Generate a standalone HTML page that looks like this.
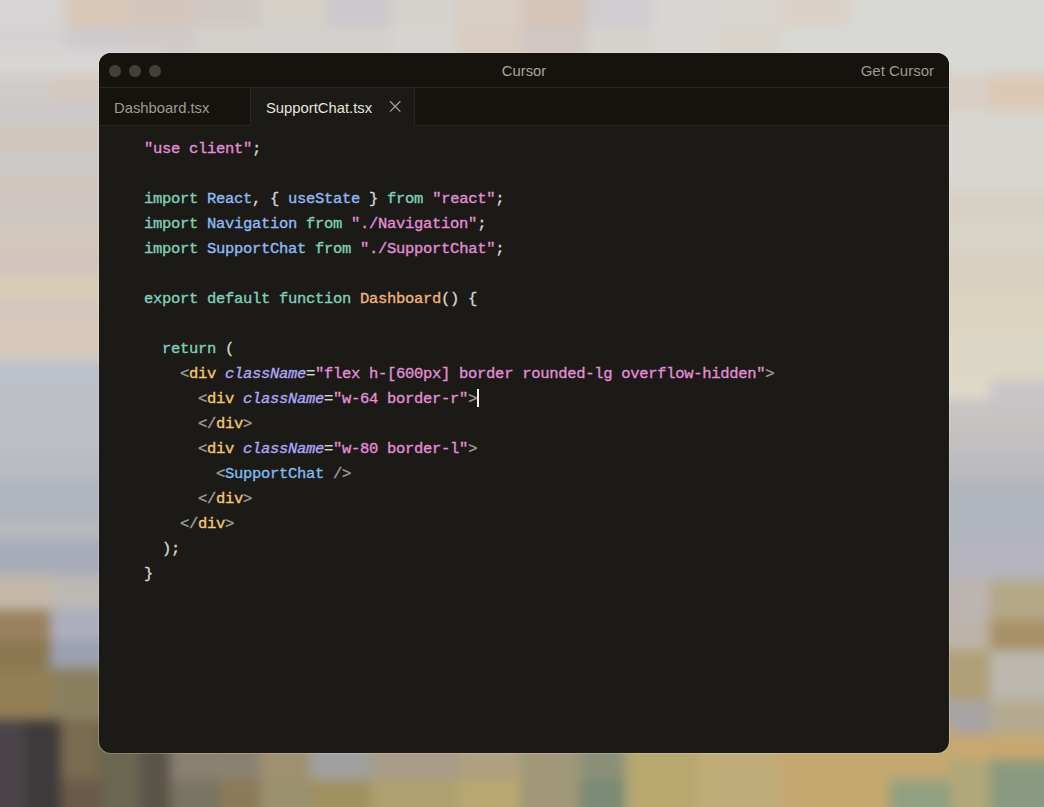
<!DOCTYPE html>
<html>
<head>
<meta charset="utf-8">
<style>
html,body{margin:0;padding:0;}
body{width:1044px;height:807px;overflow:hidden;position:relative;background:#d4d2ce;font-family:"Liberation Sans",sans-serif;}
#bg{position:absolute;left:0;top:0;width:1044px;height:807px;filter:blur(6px);}
#bg div{position:absolute;}
#st{position:absolute;left:0;top:0;width:1044px;height:807px;filter:blur(2.5px);}
#st div{position:absolute;border-radius:50%;}
.win{position:absolute;left:99px;top:53px;width:850px;height:700px;border-radius:12px;background:#1c1a16;overflow:hidden;box-shadow:0 0 0 1px rgba(255,255,255,0.2);}
.title{position:absolute;left:0;top:0;width:850px;height:34px;background:#16130e;border-bottom:1px solid #2a2721;}
.dot{position:absolute;top:11.5px;width:12px;height:12.5px;border-radius:50%;background:#42403b;}
.ttl{position:absolute;left:0;width:850px;top:1px;height:34px;line-height:34px;text-align:center;color:#a9a59d;font-size:14.8px;}
.get{position:absolute;right:15px;top:1px;height:34px;line-height:34px;color:#9d9990;font-size:15px;}
.tabs{position:absolute;left:0;top:35px;width:850px;height:37px;background:#16130e;border-bottom:1px solid #2a2721;}
.tab{position:absolute;top:0;height:37px;line-height:40px;font-size:14.8px;}
.tab1{left:15px;color:#9f9b93;}
.tab2{left:151px;width:163px;background:#1c1a16;border-left:1px solid #2a2721;border-right:1px solid #2a2721;height:38px;color:#e6e4de;}
.tab2 span{position:absolute;left:15px;}
.x{position:absolute;left:138px;top:12px;width:13px;height:13px;}
.code{position:absolute;left:45px;top:84px;font-family:"Liberation Mono",monospace;font-size:15.5px;letter-spacing:-0.3px;line-height:25px;white-space:pre;color:#d6d6d0;-webkit-text-stroke:0.35px currentColor;}
.s{color:#e08ed6}
.k{color:#80d0bc}
.i{color:#8fbaf4}
.f{color:#f0b27e}
.p{color:#d6d6d0}
.t{color:#f2c874}
.a{color:#aea6f6;font-style:italic}
.b{color:#a29e98}
.c{color:#7cbcf4}
.cur{display:inline-block;width:2px;height:18px;background:#f0f0f0;vertical-align:-4px;margin-left:0;}
</style>
</head>
<body>
<div id="bg"><div style="left:-40px;top:-40px;width:1124px;height:887px;background:#c8c4bc"></div><div style="left:-40px;top:-40px;width:105px;height:67px;background:#d6d4d4"></div><div style="left:-40px;top:27px;width:105px;height:53px;background:#d4d2d2"></div><div style="left:65px;top:-40px;width:65px;height:67px;background:#d8c8b8"></div><div style="left:65px;top:27px;width:65px;height:53px;background:#cfcace"></div><div style="left:130px;top:-40px;width:65px;height:67px;background:#d2c6bc"></div><div style="left:130px;top:27px;width:65px;height:53px;background:#d0cac8"></div><div style="left:195px;top:-40px;width:66px;height:67px;background:#d0c8c4"></div><div style="left:195px;top:27px;width:66px;height:53px;background:#d4d0cc"></div><div style="left:261px;top:-40px;width:65px;height:67px;background:#d4d0c8"></div><div style="left:261px;top:27px;width:65px;height:53px;background:#d2d0cc"></div><div style="left:326px;top:-40px;width:65px;height:67px;background:#ccc8cc"></div><div style="left:326px;top:27px;width:65px;height:53px;background:#d4d0cc"></div><div style="left:391px;top:-40px;width:65px;height:67px;background:#d6d2ce"></div><div style="left:391px;top:27px;width:65px;height:53px;background:#d6d4d0"></div><div style="left:456px;top:-40px;width:66px;height:67px;background:#d8cec4"></div><div style="left:456px;top:27px;width:66px;height:53px;background:#d8ccc0"></div><div style="left:522px;top:-40px;width:65px;height:67px;background:#d4c4b8"></div><div style="left:522px;top:27px;width:65px;height:53px;background:#d0c6c2"></div><div style="left:587px;top:-40px;width:65px;height:67px;background:#d0ccd0"></div><div style="left:587px;top:27px;width:65px;height:53px;background:#d6d2ce"></div><div style="left:652px;top:-40px;width:65px;height:67px;background:#d8d6d2"></div><div style="left:652px;top:27px;width:65px;height:53px;background:#d8d6d2"></div><div style="left:717px;top:-40px;width:66px;height:67px;background:#d8d4ce"></div><div style="left:717px;top:27px;width:66px;height:53px;background:#d8d4cc"></div><div style="left:783px;top:-40px;width:67px;height:67px;background:#dad2c8"></div><div style="left:783px;top:27px;width:67px;height:53px;background:#d8d8d4"></div><div style="left:850px;top:-40px;width:234px;height:67px;background:#d8d8d4"></div><div style="left:850px;top:27px;width:234px;height:53px;background:#d8d8d4"></div><div style="left:-40px;top:50px;width:90px;height:25px;background:#d8d6d4"></div><div style="left:50px;top:50px;width:110px;height:25px;background:#d8d6d4"></div><div style="left:-40px;top:75px;width:90px;height:25px;background:#d0ccca"></div><div style="left:50px;top:75px;width:110px;height:25px;background:#d4c8c0"></div><div style="left:-40px;top:100px;width:90px;height:25px;background:#cdc9c8"></div><div style="left:50px;top:100px;width:110px;height:25px;background:#cdc9c8"></div><div style="left:-40px;top:125px;width:90px;height:25px;background:#d0c6bc"></div><div style="left:50px;top:125px;width:110px;height:25px;background:#d0c6bc"></div><div style="left:-40px;top:150px;width:90px;height:25px;background:#ccc8c8"></div><div style="left:50px;top:150px;width:110px;height:25px;background:#ccc8c8"></div><div style="left:-40px;top:175px;width:90px;height:25px;background:#d0c6be"></div><div style="left:50px;top:175px;width:110px;height:25px;background:#d0c6be"></div><div style="left:-40px;top:200px;width:90px;height:25px;background:#cdc6c2"></div><div style="left:50px;top:200px;width:110px;height:25px;background:#cdc6c2"></div><div style="left:-40px;top:225px;width:90px;height:25px;background:#d4c8bc"></div><div style="left:50px;top:225px;width:110px;height:25px;background:#d4c8bc"></div><div style="left:-40px;top:250px;width:90px;height:25px;background:#d0c4bc"></div><div style="left:50px;top:250px;width:110px;height:25px;background:#d0c4bc"></div><div style="left:-40px;top:275px;width:90px;height:25px;background:#d8ccb8"></div><div style="left:50px;top:275px;width:110px;height:25px;background:#d8ccb8"></div><div style="left:-40px;top:300px;width:90px;height:25px;background:#d4c8bc"></div><div style="left:50px;top:300px;width:110px;height:25px;background:#d4c8bc"></div><div style="left:-40px;top:325px;width:90px;height:25px;background:#d8c8b8"></div><div style="left:50px;top:325px;width:110px;height:25px;background:#d8c8b8"></div><div style="left:-40px;top:350px;width:90px;height:10px;background:#d8ccc0"></div><div style="left:50px;top:350px;width:110px;height:10px;background:#d8ccc0"></div><div style="left:-40px;top:360px;width:90px;height:25px;background:#bcc0c8"></div><div style="left:50px;top:360px;width:110px;height:25px;background:#bcc0c8"></div><div style="left:-40px;top:385px;width:90px;height:65px;background:#bcc0c6"></div><div style="left:50px;top:385px;width:110px;height:65px;background:#bcc0c6"></div><div style="left:-40px;top:450px;width:90px;height:30px;background:#b8bcc2"></div><div style="left:50px;top:450px;width:110px;height:30px;background:#b8bcc2"></div><div style="left:-40px;top:480px;width:90px;height:40px;background:#b0b4bc"></div><div style="left:50px;top:480px;width:110px;height:40px;background:#b0b4bc"></div><div style="left:-40px;top:520px;width:90px;height:20px;background:#b8b8bc"></div><div style="left:50px;top:520px;width:110px;height:20px;background:#b8b8bc"></div><div style="left:-40px;top:540px;width:90px;height:35px;background:#a8acb8"></div><div style="left:50px;top:540px;width:110px;height:35px;background:#a8acb8"></div><div style="left:-40px;top:575px;width:90px;height:35px;background:#c4b8a8"></div><div style="left:50px;top:575px;width:110px;height:35px;background:#bcb8b4"></div><div style="left:-40px;top:610px;width:90px;height:30px;background:#9a8060"></div><div style="left:50px;top:610px;width:110px;height:30px;background:#acaebc"></div><div style="left:-40px;top:640px;width:90px;height:28px;background:#8a7850"></div><div style="left:50px;top:640px;width:110px;height:28px;background:#9ca0b0"></div><div style="left:-40px;top:668px;width:90px;height:52px;background:#947e54"></div><div style="left:50px;top:668px;width:110px;height:52px;background:#8a8060"></div><div style="left:-40px;top:720px;width:90px;height:20px;background:#7a6048"></div><div style="left:50px;top:720px;width:110px;height:20px;background:#8a7048"></div><div style="left:-40px;top:740px;width:90px;height:20px;background:#4a4040"></div><div style="left:50px;top:740px;width:110px;height:20px;background:#8a7048"></div><div style="left:-40px;top:760px;width:90px;height:87px;background:#443e40"></div><div style="left:50px;top:760px;width:110px;height:87px;background:#6a5a48"></div><div style="left:890px;top:50px;width:100px;height:25px;background:#d8d8d4"></div><div style="left:990px;top:50px;width:94px;height:25px;background:#d8d8d4"></div><div style="left:890px;top:75px;width:100px;height:35px;background:#d8cec4"></div><div style="left:990px;top:75px;width:94px;height:35px;background:#dcc8b4"></div><div style="left:890px;top:110px;width:100px;height:40px;background:#d8d6d0"></div><div style="left:990px;top:110px;width:94px;height:40px;background:#d8d6d0"></div><div style="left:890px;top:150px;width:100px;height:40px;background:#d8d6d0"></div><div style="left:990px;top:150px;width:94px;height:40px;background:#d8d6d0"></div><div style="left:890px;top:190px;width:100px;height:30px;background:#d8d0c4"></div><div style="left:990px;top:190px;width:94px;height:30px;background:#d8d0c4"></div><div style="left:890px;top:220px;width:100px;height:30px;background:#d8d4c8"></div><div style="left:990px;top:220px;width:94px;height:30px;background:#d8d4c8"></div><div style="left:890px;top:250px;width:100px;height:40px;background:#d8d0c0"></div><div style="left:990px;top:250px;width:94px;height:40px;background:#d8d0c0"></div><div style="left:890px;top:290px;width:100px;height:40px;background:#dcd4c0"></div><div style="left:990px;top:290px;width:94px;height:40px;background:#dcd4c0"></div><div style="left:890px;top:330px;width:100px;height:50px;background:#dcd6c4"></div><div style="left:990px;top:330px;width:94px;height:50px;background:#dcd6c4"></div><div style="left:890px;top:380px;width:100px;height:20px;background:#ddd8c8"></div><div style="left:990px;top:380px;width:94px;height:20px;background:#c8c6ca"></div><div style="left:890px;top:400px;width:100px;height:25px;background:#c8c4c4"></div><div style="left:990px;top:400px;width:94px;height:25px;background:#c8c4c4"></div><div style="left:890px;top:425px;width:100px;height:25px;background:#c4c0c0"></div><div style="left:990px;top:425px;width:94px;height:25px;background:#c4c0c0"></div><div style="left:890px;top:450px;width:100px;height:30px;background:#bcbcc0"></div><div style="left:990px;top:450px;width:94px;height:30px;background:#bcbcc0"></div><div style="left:890px;top:480px;width:100px;height:60px;background:#b0b4bc"></div><div style="left:990px;top:480px;width:94px;height:60px;background:#b0b4bc"></div><div style="left:890px;top:540px;width:100px;height:40px;background:#b6b4be"></div><div style="left:990px;top:540px;width:94px;height:40px;background:#b6b4be"></div><div style="left:890px;top:580px;width:100px;height:40px;background:#bcb4b0"></div><div style="left:990px;top:580px;width:94px;height:40px;background:#b4a888"></div><div style="left:890px;top:620px;width:100px;height:30px;background:#bcb4a8"></div><div style="left:990px;top:620px;width:94px;height:30px;background:#a89068"></div><div style="left:890px;top:650px;width:100px;height:50px;background:#b0a078"></div><div style="left:990px;top:650px;width:94px;height:50px;background:#bcb8b0"></div><div style="left:890px;top:700px;width:100px;height:35px;background:#a8a4a4"></div><div style="left:990px;top:700px;width:94px;height:35px;background:#b4aa90"></div><div style="left:890px;top:735px;width:100px;height:25px;background:#c8a870"></div><div style="left:990px;top:735px;width:94px;height:25px;background:#c8a870"></div><div style="left:890px;top:760px;width:100px;height:87px;background:#b0a878"></div><div style="left:990px;top:760px;width:94px;height:87px;background:#8a9a80"></div><div style="left:-40px;top:720px;width:65px;height:60px;background:#4a4448"></div><div style="left:-40px;top:780px;width:65px;height:67px;background:#4a4448"></div><div style="left:25px;top:720px;width:35px;height:60px;background:#3e3a3a"></div><div style="left:25px;top:780px;width:35px;height:67px;background:#3e3a3a"></div><div style="left:60px;top:720px;width:40px;height:60px;background:#7a6a50"></div><div style="left:60px;top:780px;width:40px;height:67px;background:#6a5a48"></div><div style="left:100px;top:720px;width:40px;height:60px;background:#6a6650"></div><div style="left:100px;top:780px;width:40px;height:67px;background:#6a6650"></div><div style="left:140px;top:720px;width:30px;height:60px;background:#5a5448"></div><div style="left:140px;top:780px;width:30px;height:67px;background:#5a5448"></div><div style="left:170px;top:720px;width:50px;height:60px;background:#8a8070"></div><div style="left:170px;top:780px;width:50px;height:67px;background:#7a7462"></div><div style="left:220px;top:720px;width:40px;height:60px;background:#8a8270"></div><div style="left:220px;top:780px;width:40px;height:67px;background:#8a7a58"></div><div style="left:260px;top:720px;width:50px;height:60px;background:#a09070"></div><div style="left:260px;top:780px;width:50px;height:67px;background:#9a9070"></div><div style="left:310px;top:720px;width:60px;height:60px;background:#a0a0a0"></div><div style="left:310px;top:780px;width:60px;height:67px;background:#a09060"></div><div style="left:370px;top:720px;width:90px;height:60px;background:#a89c88"></div><div style="left:370px;top:780px;width:90px;height:67px;background:#b0a070"></div><div style="left:460px;top:720px;width:60px;height:60px;background:#b0a080"></div><div style="left:460px;top:780px;width:60px;height:67px;background:#b8a870"></div><div style="left:520px;top:720px;width:60px;height:60px;background:#a09878"></div><div style="left:520px;top:780px;width:60px;height:67px;background:#a09878"></div><div style="left:580px;top:720px;width:45px;height:60px;background:#8a9078"></div><div style="left:580px;top:780px;width:45px;height:67px;background:#7a8a74"></div><div style="left:625px;top:720px;width:75px;height:60px;background:#b8a870"></div><div style="left:625px;top:780px;width:75px;height:67px;background:#b8a870"></div><div style="left:700px;top:720px;width:80px;height:60px;background:#c0ac78"></div><div style="left:700px;top:780px;width:80px;height:67px;background:#c0ac78"></div><div style="left:780px;top:720px;width:110px;height:60px;background:#c4a870"></div><div style="left:780px;top:780px;width:110px;height:67px;background:#c4a870"></div><div style="left:890px;top:720px;width:60px;height:60px;background:#c4a870"></div><div style="left:890px;top:780px;width:60px;height:67px;background:#90a080"></div></div>
<div class="win">
  <div class="title">
    <div class="dot" style="left:10px"></div>
    <div class="dot" style="left:30px"></div>
    <div class="dot" style="left:50px"></div>
    <div class="ttl">Cursor</div>
    <div class="get">Get Cursor</div>
  </div>
  <div class="tabs">
    <div class="tab tab1">Dashboard.tsx</div>
    <div class="tab tab2"><span>SupportChat.tsx</span>
      <svg class="x" viewBox="0 0 13 13"><path d="M1 1.2 L11.4 11.6 M11.4 1.2 L1 11.6" stroke="#a3a19b" stroke-width="1.25" fill="none"/></svg>
    </div>
  </div>
<div class="code"><span class="s">"use client"</span>;

<span class="k">import</span> <span class="i">React</span>, { <span class="i">useState</span> } <span class="k">from</span> <span class="s">"react"</span>;
<span class="k">import</span> <span class="i">Navigation</span> <span class="k">from</span> <span class="s">"./Navigation"</span>;
<span class="k">import</span> <span class="i">SupportChat</span> <span class="k">from</span> <span class="s">"./SupportChat"</span>;

<span class="k">export</span> <span class="k">default</span> <span class="k">function</span> <span class="f">Dashboard</span>() {

  <span class="k">return</span> (
    <span class="b">&lt;</span><span class="t">div</span> <span class="a">className</span>=<span class="s">"flex h-[600px] border rounded-lg overflow-hidden"</span><span class="b">&gt;</span>
      <span class="b">&lt;</span><span class="t">div</span> <span class="a">className</span>=<span class="s">"w-64 border-r"</span><span class="b">&gt;</span><span class="cur"></span>
      <span class="b">&lt;/</span><span class="t">div</span><span class="b">&gt;</span>
      <span class="b">&lt;</span><span class="t">div</span> <span class="a">className</span>=<span class="s">"w-80 border-l"</span><span class="b">&gt;</span>
        <span class="b">&lt;</span><span class="c">SupportChat</span> <span class="b">/&gt;</span>
      <span class="b">&lt;/</span><span class="t">div</span><span class="b">&gt;</span>
    <span class="b">&lt;/</span><span class="t">div</span><span class="b">&gt;</span>
  );
}</div>
</div>
</body>
</html>
